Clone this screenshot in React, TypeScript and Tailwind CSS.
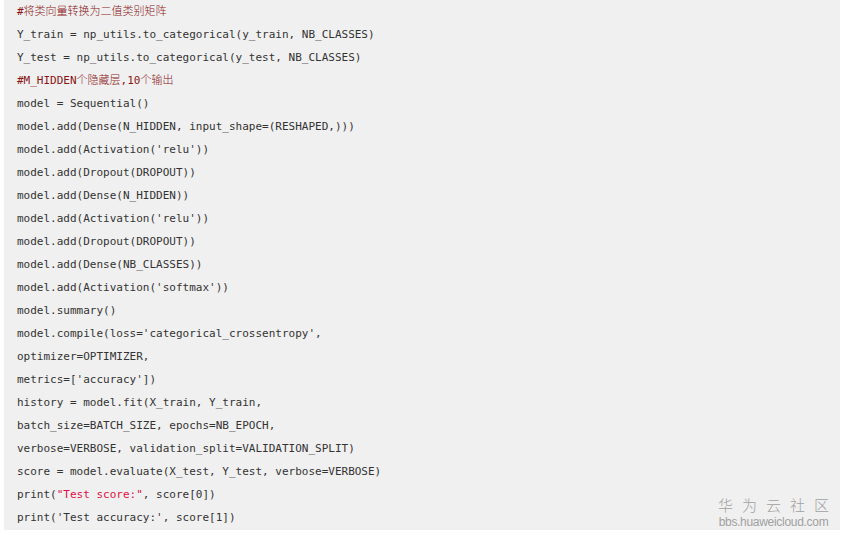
const lines: { t: string; kind?: "comment" | "str" }[] = [
  { t: "#将类向量转换为二值类别矩阵", kind: "comment" },
  { t: "Y_train = np_utils.to_categorical(y_train, NB_CLASSES)" },
  { t: "Y_test = np_utils.to_categorical(y_test, NB_CLASSES)" },
  { t: "#M_HIDDEN个隐藏层,10个输出", kind: "comment" },
  { t: "model = Sequential()" },
  { t: "model.add(Dense(N_HIDDEN, input_shape=(RESHAPED,)))" },
  { t: "model.add(Activation('relu'))" },
  { t: "model.add(Dropout(DROPOUT))" },
  { t: "model.add(Dense(N_HIDDEN))" },
  { t: "model.add(Activation('relu'))" },
  { t: "model.add(Dropout(DROPOUT))" },
  { t: "model.add(Dense(NB_CLASSES))" },
  { t: "model.add(Activation('softmax'))" },
  { t: "model.summary()" },
  { t: "model.compile(loss='categorical_crossentropy'," },
  { t: "optimizer=OPTIMIZER," },
  { t: "metrics=['accuracy'])" },
  { t: "history = model.fit(X_train, Y_train," },
  { t: "batch_size=BATCH_SIZE, epochs=NB_EPOCH," },
  { t: "verbose=VERBOSE, validation_split=VALIDATION_SPLIT)" },
  { t: "score = model.evaluate(X_test, Y_test, verbose=VERBOSE)" },
  { t: "print(", kind: "str" },
  { t: "print('Test accuracy:', score[1])" },
]

export default function App() {
  return (
    <div className="w-[843px] h-[535px] bg-white pl-[4px] pr-[3px] pb-[5px]">
      <div className="relative h-full bg-[#f0f0f0] pl-[13px] font-['DejaVu_Sans_Mono','Noto_Sans_CJK_SC',monospace] text-[11px] text-[#333]">
        {lines.map((l, i) => (
          <div key={i} className="h-[23px] leading-[23px] whitespace-pre">
            {l.kind === "comment" ? (
              <span className="text-[#8a1515] font-light">{l.t}</span>
            ) : l.kind === "str" ? (
              <>
                print(<span className="text-[#dd1144]">"Test score:"</span>, score[0])
              </>
            ) : (
              l.t
            )}
          </div>
        ))}

        <div className="absolute right-[2px] bottom-[1px] flex flex-col items-center text-[#a0a0a0] font-['Noto_Sans_CJK_SC',sans-serif]">
          <div className="text-[15px] leading-[20px] tracking-[9px] pl-[9px] font-light">华为云社区</div>
          <div className="text-[12px] leading-[14px] font-['Liberation_Sans',sans-serif] tracking-[-0.3px]">bbs.huaweicloud.com</div>
        </div>
      </div>
    </div>
  )
}
